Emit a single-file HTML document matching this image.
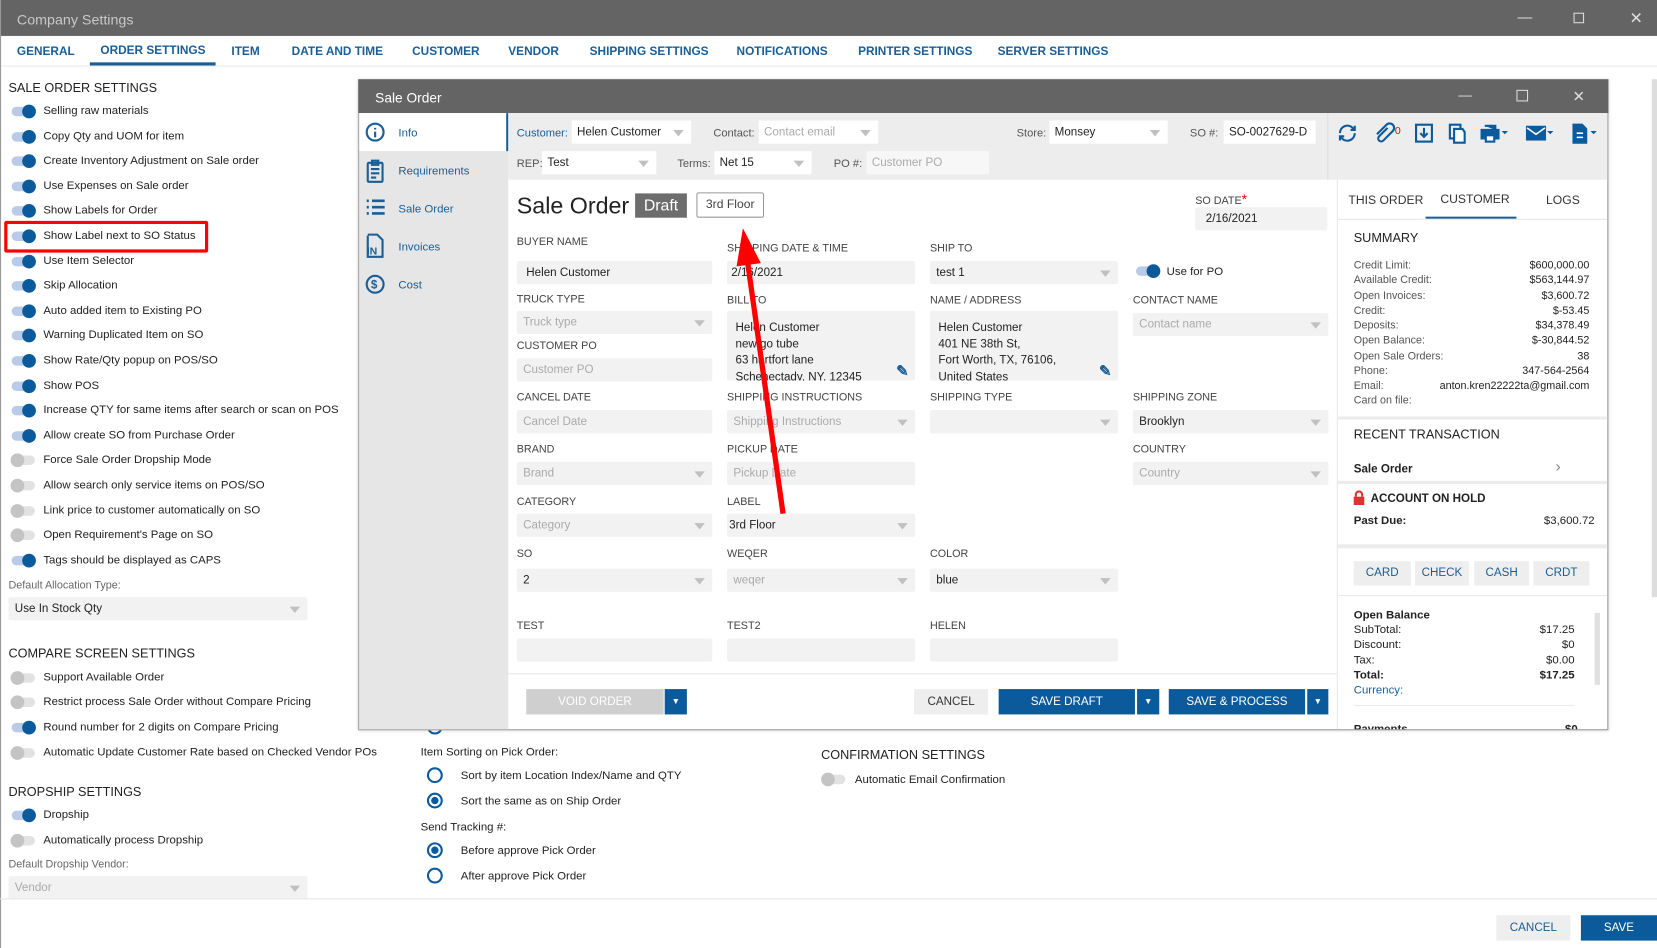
<!DOCTYPE html>
<html><head><meta charset="utf-8"><style>
*{box-sizing:border-box;margin:0;padding:0}
html,body{width:1657px;height:948px;overflow:hidden;background:#fff}
#w{position:absolute;left:0;top:0;width:1568px;height:897px;transform:scale(1.05676,1.05686);transform-origin:0 0;font-family:"Liberation Sans",sans-serif;font-size:10.8px;color:#222}
.a{position:absolute;white-space:nowrap}
.tg{position:absolute;width:22px;height:9px;border-radius:5px;background:#b8cbe8}
.tg::after{content:"";position:absolute;right:-1px;top:-2px;width:13px;height:13px;border-radius:50%;background:#0b5b9c}
.tg.off{background:#e2e2e2}.tg.off::after{left:-1px;right:auto;background:#c4c4c4}
.lbl{position:absolute;font-size:10.2px;color:#444;white-space:nowrap}
.in{position:absolute;background:#f2f2f2;height:22px;border-radius:2px;padding:5px 6px;font-size:11px;color:#222;white-space:nowrap;overflow:hidden}
.ph{color:#aaa}
.sel::after{content:"";position:absolute;right:7px;top:9px;border-left:5px solid transparent;border-right:5px solid transparent;border-top:6px solid #c0c0c0}
.wsel{position:absolute;background:#fff;height:22px;padding:5px 5px;font-size:11px;white-space:nowrap}
.blue{color:#1a5e96}
.tab{position:absolute;top:43px;font-size:11.2px;font-weight:bold;color:#1a5e96;white-space:nowrap}
.rad{position:absolute;width:15px;height:15px;border:2px solid #0b5b9c;border-radius:50%}
.rad.on::after{content:"";position:absolute;left:2px;top:2px;width:7px;height:7px;border-radius:50%;background:#0b5b9c}
.sr{position:absolute;left:1281px;width:223px;font-size:10.2px;color:#555}
.sr span{position:absolute;right:0;color:#222}
.btn{position:absolute;height:24px;line-height:24px;text-align:center;font-size:11px}
</style></head><body><div id="w">
<div class="a" style="left:0;top:0;width:1568px;height:34px;background:#646464"></div>
<div class="a" style="left:16px;top:11px;font-size:13.5px;color:#c8c8c8">Company Settings</div>
<div class="a" style="left:1436px;top:8px;color:#ddd;font-size:14px">—</div>
<div class="a" style="left:1489px;top:12px;width:10px;height:10px;border:1px solid #ddd"></div>
<div class="a" style="left:1542px;top:8px;color:#ddd;font-size:15px">✕</div>
<div class="tab" style="left:16px">GENERAL</div>
<div class="tab" style="left:95px;top:42px">ORDER SETTINGS</div>
<div class="a" style="top:59px;left:85px;width:119px;height:3px;background:#1a5e96"></div>
<div class="tab" style="left:219px">ITEM</div>
<div class="tab" style="left:276px">DATE AND TIME</div>
<div class="tab" style="left:390px">CUSTOMER</div>
<div class="tab" style="left:481px">VENDOR</div>
<div class="tab" style="left:558px">SHIPPING SETTINGS</div>
<div class="tab" style="left:697px">NOTIFICATIONS</div>
<div class="tab" style="left:812px">PRINTER SETTINGS</div>
<div class="tab" style="left:944px">SERVER SETTINGS</div>
<div class="a" style="top:62px;left:0;width:1568px;height:1px;background:#e8e8e8"></div>
<div class="a" style="top:0;left:0;width:1px;height:897px;background:#999"></div>
<div class="a" style="top:75px;left:1563px;width:5px;height:490px;background:#ddd"></div>
<div class="a" style="left:8px;top:76px;font-size:12px;color:#222">SALE ORDER SETTINGS</div>
<div class="a" style="left:4px;top:209px;width:193px;height:30px;border:3px solid #f00;border-radius:2px"></div>
<div id="list"></div>
<div class="a" style="left:8px;top:549px;font-size:10.2px;color:#666">Default Allocation Type:</div>
<div class="in sel" style="left:8px;top:565px;width:283px">Use In Stock Qty</div>
<div class="a" style="left:8px;top:611px;font-size:12px">COMPARE SCREEN SETTINGS</div>
<div class="a" style="left:8px;top:742px;font-size:12px">DROPSHIP SETTINGS</div>
<div class="a" style="left:8px;top:813px;font-size:10.2px;color:#666">Default Dropship Vendor:</div>
<div class="in sel ph" style="left:8px;top:829px;width:283px">Vendor</div>
<div class="a" style="left:0;top:850px;width:1568px;height:1px;background:#e6e6e6"></div>
<div class="btn" style="left:1416px;top:866px;width:70px;background:#eee;color:#1a5e96">CANCEL</div>
<div class="btn" style="left:1496px;top:866px;width:72px;background:#0b5b9c;color:#fff">SAVE</div>
<div class="rad" style="left:404px;top:680px"></div>
<div class="a" style="left:398px;top:706px">Item Sorting on Pick Order:</div>
<div class="rad" style="left:404px;top:726px"></div><div class="a" style="left:436px;top:728px">Sort by item Location Index/Name and QTY</div>
<div class="rad on" style="left:404px;top:750px"></div><div class="a" style="left:436px;top:752px">Sort the same as on Ship Order</div>
<div class="a" style="left:398px;top:777px">Send Tracking #:</div>
<div class="rad on" style="left:404px;top:797px"></div><div class="a" style="left:436px;top:799px">Before approve Pick Order</div>
<div class="rad" style="left:404px;top:821px"></div><div class="a" style="left:436px;top:823px">After approve Pick Order</div>
<div class="a" style="left:777px;top:707px;font-size:12px">CONFIRMATION SETTINGS</div>
<div class="tg off" style="left:778px;top:733px"></div><div class="a" style="left:809px;top:732px">Automatic Email Confirmation</div>

<div class="a" style="left:339px;top:75px;width:1183px;height:616px;background:#fff;border:1px solid #999;box-shadow:0 0 3px rgba(0,0,0,.2)"></div>
<div class="a" style="left:339px;top:75px;width:1183px;height:32px;background:#646464"></div>
<div class="a" style="left:355px;top:85px;font-size:13px;color:#fff">Sale Order</div>
<div class="a" style="left:1380px;top:82px;color:#ddd;font-size:13px">—</div>
<div class="a" style="left:1435px;top:85px;width:11px;height:11px;border:1px solid #ddd"></div>
<div class="a" style="left:1488px;top:83px;color:#ddd;font-size:14px">✕</div>
<div class="a" style="left:340px;top:107px;width:141px;height:583px;background:#e6e6e6"></div>
<div class="a" style="left:340px;top:107px;width:140px;height:36px;background:#fff"></div>
<div class="a" style="left:479px;top:107px;width:2px;height:36px;background:#1a5e96"></div>
<svg class="a" style="left:345px;top:115px" width="22" height="170" viewBox="0 0 22 170" fill="none" stroke="#1a5e96" stroke-width="2">
<circle cx="10" cy="10" r="8"/><path d="M10 6v1.5M10 9.5v5.5"/>
<rect x="3" y="39" width="14" height="18" rx="1"/><path d="M7 37h6v4H7zM6 45h8M6 49h8M6 53h5"/>
<path d="M2 75h2M7 75h12M2 81h2M7 81h12M2 87h2M7 87h12" stroke-width="2.5"/>
<path d="M3 108v20h14v-16l-5-5H3" /><text x="2" y="126" font-size="10" font-weight="bold" fill="#1a5e96" stroke="none" font-family="Liberation Sans">IN</text>
<circle cx="10" cy="154" r="8"/><text x="6" y="158" font-size="11" font-weight="bold" fill="#1a5e96" stroke="none" font-family="Liberation Sans">$</text>
</svg>
<div class="a blue" style="left:377px;top:120px">Info</div>
<div class="a blue" style="left:377px;top:156px">Requirements</div>
<div class="a blue" style="left:377px;top:192px">Sale Order</div>
<div class="a blue" style="left:377px;top:228px">Invoices</div>
<div class="a blue" style="left:377px;top:264px">Cost</div>
<div class="a" style="left:481px;top:107px;width:1040px;height:63px;background:#ededed"></div>
<div class="a" style="left:1256px;top:107px;width:1px;height:63px;background:#ddd"></div>
<div class="a blue" style="left:489px;top:120px;font-size:10.5px">Customer:</div>
<div class="wsel sel" style="left:541px;top:114px;width:113px">Helen Customer</div>
<div class="a" style="left:675px;top:120px;font-size:10.5px;color:#555">Contact:</div>
<div class="wsel sel ph" style="left:718px;top:114px;width:113px">Contact email</div>
<div class="a" style="left:962px;top:120px;font-size:10.5px;color:#555">Store:</div>
<div class="wsel sel" style="left:993px;top:114px;width:112px">Monsey</div>
<div class="a" style="left:1126px;top:120px;font-size:10.5px;color:#555">SO #:</div>
<div class="wsel" style="left:1158px;top:114px;width:87px">SO-0027629-D</div>
<div class="a" style="left:489px;top:149px;font-size:10.5px;color:#555">REP:</div>
<div class="wsel sel" style="left:513px;top:143px;width:108px">Test</div>
<div class="a" style="left:641px;top:149px;font-size:10.5px;color:#555">Terms:</div>
<div class="wsel sel" style="left:676px;top:143px;width:92px">Net 15</div>
<div class="a" style="left:789px;top:149px;font-size:10.5px;color:#555">PO #:</div>
<div class="wsel ph" style="left:820px;top:143px;width:116px;background:#f7f7f7">Customer PO</div>
<svg class="a" style="left:1265px;top:114px" width="256" height="24" viewBox="0 0 256 24" fill="none" stroke="#0b5b9c" stroke-width="2">
<path d="M3 12a7 7 0 0 1 12-5l2 2M17 12a7 7 0 0 1-12 5l-2-2"/><path d="M17 5v4h-4M3 19v-4h4"/>
<path d="M48 7l-8 8a2.5 2.5 0 0 0 4 4l9-9a4 4 0 0 0-6-6l-9 9" />
<text x="55" y="13" font-size="10" fill="#e00" stroke="none" font-family="Liberation Sans">0</text>
<rect x="75" y="4" width="15" height="16"/><path d="M82.5 7v8M79 12l3.5 3.5L86 12"/>
<rect x="107" y="4" width="10" height="13"/><path d="M111 8h8l2 3v10h-10z" fill="#fff"/>
<path d="M140 5h10v4M137 9h16v8h-16z" fill="#0b5b9c"/><rect x="141" y="14" width="8" height="6" fill="#fff"/>
<path d="M156 10l3 3 3-3z" fill="#0b5b9c" stroke="none"/>
<rect x="180" y="6" width="17" height="12" fill="#0b5b9c"/><path d="M180 7l8.5 6 8.5-6" stroke="#fff" stroke-width="1.5"/>
<path d="M199 10l3 3 3-3z" fill="#0b5b9c" stroke="none"/>
<path d="M224 4h8l4 4v13h-12z" fill="#0b5b9c"/><path d="M227 12h6M227 16h6" stroke="#fff" stroke-width="1.5"/>
<path d="M240 10l3 3 3-3z" fill="#0b5b9c" stroke="none"/>
</svg>
<div class="a" style="left:489px;top:182px;font-size:22px;color:#222">Sale Order</div>
<div class="a" style="left:601px;top:183px;width:49px;height:23px;background:#6d6d6d;color:#fff;font-size:15px;text-align:center;line-height:23px">Draft</div>
<div class="a" style="left:659px;top:182px;width:64px;height:24px;border:1px solid #999;border-radius:2px;color:#444;font-size:11.5px;text-align:center;line-height:22px">3rd Floor</div>
<div class="lbl" style="left:1131px;top:181px">SO DATE<span style="color:#e00;font-size:13px">*</span></div>
<div class="in" style="left:1131px;top:196px;width:125px;padding-left:10px">2/16/2021</div>

<div class="lbl" style="left:489px;top:224px">BUYER NAME</div>
<div class="lbl" style="left:688px;top:230px">SHIPPING DATE &amp; TIME</div>
<div class="lbl" style="left:880px;top:230px">SHIP TO</div>
<div class="in" style="left:489px;top:247px;width:185px;padding-left:9px">Helen Customer</div>
<div class="in" style="left:688px;top:247px;width:178px;padding-left:4px">2/16/2021</div>
<div class="in sel" style="left:880px;top:247px;width:178px">test 1</div>
<div class="tg" style="left:1075px;top:252px"></div><div class="a" style="left:1104px;top:251px">Use for PO</div>
<div class="lbl" style="left:489px;top:278px">TRUCK TYPE</div>
<div class="lbl" style="left:688px;top:279px">BILL TO</div>
<div class="lbl" style="left:880px;top:279px">NAME / ADDRESS</div>
<div class="lbl" style="left:1072px;top:279px">CONTACT NAME</div>
<div class="in sel ph" style="left:489px;top:294px;width:185px">Truck type</div>
<div class="in" style="left:688px;top:294px;width:178px;height:66px;padding:9px 8px;line-height:15.5px">Helen Customer<br>new go tube<br>63 hartfort lane<br>Schenectady, NY, 12345</div>
<div class="in" style="left:880px;top:294px;width:178px;height:66px;padding:9px 8px;line-height:15.5px">Helen Customer<br>401 NE 38th St,<br>Fort Worth, TX, 76106,<br>United States</div>
<div class="a" style="left:848px;top:343px;color:#1a5e96;font-size:14px;font-weight:bold">✎</div>
<div class="a" style="left:1040px;top:343px;color:#1a5e96;font-size:14px;font-weight:bold">✎</div>
<div class="in sel ph" style="left:1072px;top:296px;width:185px">Contact name</div>
<div class="lbl" style="left:489px;top:322px">CUSTOMER PO</div>
<div class="in ph" style="left:489px;top:339px;width:185px">Customer PO</div>
<div class="lbl" style="left:489px;top:371px">CANCEL DATE</div>
<div class="lbl" style="left:688px;top:371px">SHIPPING INSTRUCTIONS</div>
<div class="lbl" style="left:880px;top:371px">SHIPPING TYPE</div>
<div class="lbl" style="left:1072px;top:371px">SHIPPING ZONE</div>
<div class="in ph" style="left:489px;top:388px;width:185px">Cancel Date</div>
<div class="in sel ph" style="left:688px;top:388px;width:178px">Shipping Instructions</div>
<div class="in sel" style="left:880px;top:388px;width:178px"></div>
<div class="in sel" style="left:1072px;top:388px;width:185px">Brooklyn</div>
<div class="lbl" style="left:489px;top:420px">BRAND</div>
<div class="lbl" style="left:688px;top:420px">PICKUP DATE</div>
<div class="lbl" style="left:1072px;top:420px">COUNTRY</div>
<div class="in sel ph" style="left:489px;top:437px;width:185px">Brand</div>
<div class="in ph" style="left:688px;top:437px;width:178px">Pickup Date</div>
<div class="in sel ph" style="left:1072px;top:437px;width:185px">Country</div>
<div class="lbl" style="left:489px;top:470px">CATEGORY</div>
<div class="lbl" style="left:688px;top:470px">LABEL</div>
<div class="in sel ph" style="left:489px;top:486px;width:185px">Category</div>
<div class="in sel" style="left:688px;top:486px;width:178px;padding-left:2px">3rd Floor</div>
<div class="lbl" style="left:489px;top:519px">SO</div>
<div class="lbl" style="left:688px;top:519px">WEQER</div>
<div class="lbl" style="left:880px;top:519px">COLOR</div>
<div class="in sel" style="left:489px;top:538px;width:185px">2</div>
<div class="in sel ph" style="left:688px;top:538px;width:178px">weqer</div>
<div class="in sel" style="left:880px;top:538px;width:178px">blue</div>
<div class="lbl" style="left:489px;top:587px">TEST</div>
<div class="lbl" style="left:688px;top:587px">TEST2</div>
<div class="lbl" style="left:880px;top:587px">HELEN</div>
<div class="in" style="left:489px;top:604px;width:185px"></div>
<div class="in" style="left:688px;top:604px;width:178px"></div>
<div class="in" style="left:880px;top:604px;width:178px"></div>
<div class="a" style="left:481px;top:637px;width:784px;height:1px;background:#e6e6e6"></div>
<div class="btn" style="left:498px;top:652px;width:130px;background:#cfcfcf;color:#fff">VOID ORDER</div>
<div class="btn" style="left:629px;top:652px;width:21px;background:#0b5b9c;color:#fff;font-size:8px">▼</div>
<div class="btn" style="left:865px;top:652px;width:70px;background:#eee;color:#333">CANCEL</div>
<div class="btn" style="left:945px;top:652px;width:129px;background:#0b5b9c;color:#fff">SAVE DRAFT</div>
<div class="btn" style="left:1076px;top:652px;width:21px;background:#0b5b9c;color:#fff;font-size:8px">▼</div>
<div class="btn" style="left:1106px;top:652px;width:129px;background:#0b5b9c;color:#fff">SAVE &amp; PROCESS</div>
<div class="btn" style="left:1237px;top:652px;width:20px;background:#0b5b9c;color:#fff;font-size:8px">▼</div>
<div class="a" style="left:1265px;top:170px;width:1px;height:520px;background:#e6e6e6"></div>
<div class="a" style="left:1276px;top:184px;font-size:11.5px;color:#333">THIS ORDER</div>
<div class="a" style="left:1363px;top:183px;font-size:11.5px;color:#333">CUSTOMER</div>
<div class="a" style="left:1463px;top:184px;font-size:11.5px;color:#333">LOGS</div>
<div class="a" style="left:1349px;top:205px;width:86px;height:2px;background:#1a5e96"></div>
<div class="a" style="left:1266px;top:207px;width:255px;height:1px;background:#e6e6e6"></div>
<div class="a" style="left:1281px;top:218px;font-size:12px;color:#222">SUMMARY</div>
<div class="sr" style="top:246px">Credit Limit:<span>$600,000.00</span></div>
<div class="sr" style="top:260px">Available Credit:<span>$563,144.97</span></div>
<div class="sr" style="top:275px">Open Invoices:<span>$3,600.72</span></div>
<div class="sr" style="top:289px">Credit:<span>$-53.45</span></div>
<div class="sr" style="top:303px">Deposits:<span>$34,378.49</span></div>
<div class="sr" style="top:317px">Open Balance:<span>$-30,844.52</span></div>
<div class="sr" style="top:332px">Open Sale Orders:<span>38</span></div>
<div class="sr" style="top:346px">Phone:<span>347-564-2564</span></div>
<div class="sr" style="top:360px">Email:<span>anton.kren22222ta@gmail.com</span></div>
<div class="sr" style="top:374px">Card on file:</div>
<div class="a" style="left:1266px;top:394px;width:255px;height:3px;background:#ececec"></div>
<div class="a" style="left:1281px;top:404px;font-size:12px">RECENT TRANSACTION</div>
<div class="a" style="left:1281px;top:438px;font-size:11px;font-weight:bold">Sale Order</div>
<div class="a" style="left:1472px;top:433px;color:#888;font-size:15px">›</div>
<div class="a" style="left:1266px;top:455px;width:255px;height:3px;background:#ececec"></div>
<svg class="a" style="left:1280px;top:464px" width="12" height="14"><path d="M3 6V4a3 3 0 0 1 6 0v2" stroke="#d33" stroke-width="2" fill="none"/><rect x="1" y="6" width="10" height="8" fill="#d33"/></svg>
<div class="a" style="left:1297px;top:466px;font-size:11px;font-weight:bold">ACCOUNT ON HOLD</div>
<div class="a" style="left:1281px;top:487px;font-weight:bold">Past Due:</div>
<div class="a" style="left:1509px;top:487px;transform:translateX(-100%)">$3,600.72</div>
<div class="a" style="left:1266px;top:515px;width:255px;height:4px;background:#ececec"></div>
<div class="btn" style="left:1281px;top:531px;width:54px;height:23px;line-height:23px;background:#eee;color:#1a5e96">CARD</div>
<div class="btn" style="left:1339px;top:531px;width:51px;height:23px;line-height:23px;background:#eee;color:#1a5e96">CHECK</div>
<div class="btn" style="left:1395px;top:531px;width:52px;height:23px;line-height:23px;background:#eee;color:#1a5e96">CASH</div>
<div class="btn" style="left:1451px;top:531px;width:53px;height:23px;line-height:23px;background:#eee;color:#1a5e96">CRDT</div>
<div class="a" style="left:1266px;top:563px;width:255px;height:1px;background:#eaeaea"></div>
<div class="a" style="left:1281px;top:576px;font-weight:bold">Open Balance</div>
<div class="sr" style="top:590px;width:209px;color:#222;font-size:10.8px">SubTotal:<span>$17.25</span></div>
<div class="sr" style="top:604px;width:209px;color:#222;font-size:10.8px">Discount:<span>$0</span></div>
<div class="sr" style="top:619px;width:209px;color:#222;font-size:10.8px">Tax:<span>$0.00</span></div>
<div class="sr" style="top:633px;width:209px;color:#222;font-size:10.8px;font-weight:bold">Total:<span>$17.25</span></div>
<div class="a blue" style="left:1281px;top:647px;font-size:10.8px">Currency:</div>
<div class="a" style="left:1281px;top:667px;width:209px;height:1px;background:#eaeaea"></div>
<div class="a" style="left:1281px;top:684px;font-weight:bold;height:6px;overflow:hidden;width:220px">Payments<span style="position:absolute;left:200px">$0</span></div>
<div class="a" style="left:1509px;top:580px;width:5px;height:68px;background:#e0e0e0"></div>
<svg class="a" style="left:0;top:0" width="1568" height="897"><path d="M741 486L707 245" stroke="#f00" stroke-width="5" fill="none"/><path d="M703 216L697 252L720 249Z" fill="#f00"/></svg>
</div>
<script>
var items=[["Selling raw materials",1],["Copy Qty and UOM for item",1],["Create Inventory Adjustment on Sale order",1],["Use Expenses on Sale order",1],["Show Labels for Order",1],["Show Label next to SO Status",1],["Use Item Selector",1],["Skip Allocation",1],["Auto added item to Existing PO",1],["Warning Duplicated Item on SO",1],["Show Rate/Qty popup on POS/SO",1],["Show POS",1],["Increase QTY for same items after search or scan on POS",1],["Allow create SO from Purchase Order",1],["Force Sale Order Dropship Mode",0],["Allow search only service items on POS/SO",0],["Link price to customer automatically on SO",0],["Open Requirement's Page on SO",0],["Tags should be displayed as CAPS",1]];
var h="";items.forEach(function(it,i){var y=105+i*23.6;h+='<div class="tg'+(it[1]?'':' off')+'" style="left:11px;top:'+(y-4)+'px"></div><div class="a" style="left:41px;top:'+(y-6)+'px">'+it[0]+'</div>';});
var c=[["Support Available Order",0,641],["Restrict process Sale Order without Compare Pricing",0,664],["Round number for 2 digits on Compare Pricing",1,688],["Automatic Update Customer Rate based on Checked Vendor POs",0,712],["Dropship",1,771],["Automatically process Dropship",0,795]];
c.forEach(function(it){var y=it[2];h+='<div class="tg'+(it[1]?'':' off')+'" style="left:11px;top:'+(y-4)+'px"></div><div class="a" style="left:41px;top:'+(y-6)+'px">'+it[0]+'</div>';});
document.getElementById("list").outerHTML=h;
</script>
</body></html>
